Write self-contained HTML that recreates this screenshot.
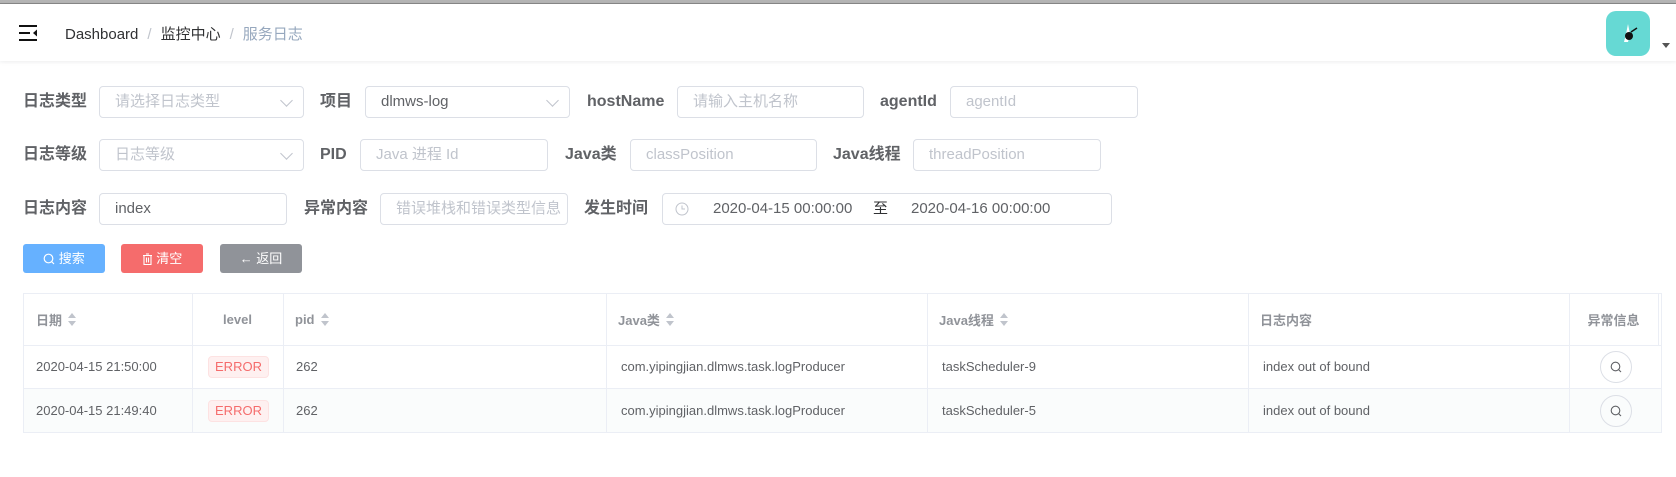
<!DOCTYPE html>
<html><head><meta charset="utf-8"><style>
*{box-sizing:border-box;margin:0;padding:0}
body{width:1676px;height:477px;overflow:hidden;background:#fff;font-family:"Liberation Sans","Noto Sans CJK SC",sans-serif;position:relative;color:#606266}
.a{position:absolute}
.top{left:0;top:0;width:1676px;height:4px;background:#b4b4b4;border-bottom:1px solid #888}
.hdr{left:0;top:4px;width:1676px;height:57px;background:#fff;box-shadow:0 1px 4px rgba(0,21,41,.08)}
.bc{top:23px;left:65px;font-size:15px;color:#303133;white-space:nowrap}
.bc .s{color:#c0c4cc;margin:0 9px}
.bc .l{color:#97a8be}
.lab{font-size:16px;font-weight:bold;color:#606266;white-space:nowrap;line-height:32px}
.in{height:32px;border:1px solid #dcdfe6;border-radius:4px;font-size:15px;line-height:30px;padding-left:15px;color:#c0c4cc;white-space:nowrap;overflow:hidden}
.in.v{color:#606266}
.arr{position:absolute;right:12px;top:9px;width:9px;height:9px;border-right:1px solid #c0c4cc;border-bottom:1px solid #c0c4cc;transform:rotate(45deg)}
.btn{height:29px;border-radius:3px;color:#fff;font-size:13px;line-height:29px;text-align:center}
.tbl{left:23px;top:293px;width:1639px;height:140px;border:1px solid #ebeef5}
.h{position:absolute;font-size:13px;font-weight:bold;color:#909399;white-space:nowrap;top:0;height:51px;display:flex;align-items:center}
.c{position:absolute;font-size:13px;color:#606266;white-space:nowrap}
.vl{position:absolute;width:1px;background:#ebeef5}
.sort{display:inline-block;margin-left:6px;width:8px;height:14px;position:relative}
.sort:before{content:"";position:absolute;left:0;top:0;border:4px solid transparent;border-bottom:5px solid #c0c4cc;border-top:0}
.sort:after{content:"";position:absolute;left:0;top:8px;border:4px solid transparent;border-top:5px solid #c0c4cc;border-bottom:0}
.tag{position:absolute;width:61px;height:22px;border:1px solid #fde2e2;background:#fef0f0;color:#f56c6c;border-radius:4px;font-size:13px;line-height:20px;text-align:center}
.cb{position:absolute;width:32px;height:32px;border:1px solid #dcdfe6;border-radius:50%}
</style></head><body>
<div class="a top"></div>
<div class="a hdr"></div>
<svg class="a" style="left:19px;top:25px" width="20" height="16" viewBox="0 0 20 16"><rect x="0" y="0" width="18" height="2" fill="#111"/><rect x="0" y="7" width="11" height="2" fill="#111"/><rect x="0" y="14" width="18" height="2" fill="#111"/><path d="M18 4.5 L14 8 L18 11.5Z" fill="#111"/></svg>
<div class="a bc">Dashboard<span class="s">/</span>监控中心<span class="s">/</span><span class="l">服务日志</span></div>
<div class="a" style="left:1606px;top:11px;width:44px;height:45px;border-radius:10px;background:#66d9d4"></div>
<svg class="a" style="left:1616px;top:20px" width="26" height="28" viewBox="0 0 26 28"><path d="M12 4 L10 14 L8 22 L12 22 L14 14Z" fill="#fff"/><circle cx="13" cy="16" r="4" fill="#111"/><path d="M15 12 L21 8" stroke="#111" stroke-width="1.5"/></svg>
<div class="a" style="left:1662px;top:43px;border:4px solid transparent;border-top:5px solid #555"></div>

<div class="a lab" style="left:23px;top:86px">日志类型</div>
<div class="a in" style="left:99px;top:86px;width:205px">请选择日志类型<span class="arr"></span></div>
<div class="a lab" style="left:320px;top:86px">项目</div>
<div class="a in v" style="left:365px;top:86px;width:205px">dlmws-log<span class="arr"></span></div>
<div class="a lab" style="left:587px;top:86px">hostName</div>
<div class="a in" style="left:677px;top:86px;width:187px">请输入主机名称</div>
<div class="a lab" style="left:880px;top:86px">agentId</div>
<div class="a in" style="left:950px;top:86px;width:188px">agentId</div>

<div class="a lab" style="left:23px;top:139px">日志等级</div>
<div class="a in" style="left:99px;top:139px;width:205px">日志等级<span class="arr"></span></div>
<div class="a lab" style="left:320px;top:139px">PID</div>
<div class="a in" style="left:360px;top:139px;width:188px">Java 进程 Id</div>
<div class="a lab" style="left:565px;top:139px">Java类</div>
<div class="a in" style="left:630px;top:139px;width:187px">classPosition</div>
<div class="a lab" style="left:833px;top:139px">Java线程</div>
<div class="a in" style="left:913px;top:139px;width:188px">threadPosition</div>

<div class="a lab" style="left:23px;top:193px">日志内容</div>
<div class="a in v" style="left:99px;top:193px;width:188px">index</div>
<div class="a lab" style="left:304px;top:193px">异常内容</div>
<div class="a in" style="left:380px;top:193px;width:188px">错误堆栈和错误类型信息</div>
<div class="a lab" style="left:584px;top:193px">发生时间</div>
<div class="a in v" style="left:662px;top:193px;width:450px;padding-left:0">
<svg style="position:absolute;left:12px;top:8px" width="14" height="14" viewBox="0 0 14 14"><circle cx="7" cy="7" r="6" fill="none" stroke="#c0c4cc"/><path d="M7 3.5V7h3" fill="none" stroke="#c0c4cc"/></svg>
<span style="position:absolute;left:50px">2020-04-15 00:00:00</span><span style="position:absolute;left:210px;color:#303133">至</span><span style="position:absolute;left:248px">2020-04-16 00:00:00</span></div>

<div class="a btn" style="left:23px;top:244px;width:82px;background:#66b1ff">
<svg style="vertical-align:-2px" width="12" height="12" viewBox="0 0 12 12"><circle cx="5.5" cy="5.5" r="4.3" fill="none" stroke="#fff" stroke-width="1.2"/><path d="M8.5 8.5L11 11" stroke="#fff" stroke-width="1.2"/></svg> 搜索</div>
<div class="a btn" style="left:121px;top:244px;width:82px;background:#f56c6c">
<svg style="vertical-align:-2px" width="11" height="12" viewBox="0 0 11 12"><path d="M1 2.5h9M4 1h3M2 2.5v9h7v-9M4.5 4.5v5M6.5 4.5v5" fill="none" stroke="#fff" stroke-width="1.1"/></svg> 清空</div>
<div class="a btn" style="left:220px;top:244px;width:82px;background:#909399">← 返回</div>

<div class="a tbl">
<div style="position:absolute;left:0;top:51px;width:100%;height:1px;background:#ebeef5"></div>
<div style="position:absolute;left:0;top:94px;width:100%;height:1px;background:#ebeef5"></div>
<div style="position:absolute;left:0;top:95px;width:100%;height:43px;background:#fafcfc"></div>
<div class="vl" style="left:168px;top:0;height:138px"></div>
<div class="vl" style="left:259px;top:0;height:138px"></div>
<div class="vl" style="left:582px;top:0;height:138px"></div>
<div class="vl" style="left:903px;top:0;height:138px"></div>
<div class="vl" style="left:1224px;top:0;height:138px"></div>
<div class="vl" style="left:1545px;top:0;height:138px"></div>
<div class="vl" style="left:1634px;top:0;height:51px"></div>
<div class="h" style="left:12px">日期<span class="sort"></span></div>
<div class="h" style="left:168px;width:91px;justify-content:center">level</div>
<div class="h" style="left:271px">pid<span class="sort"></span></div>
<div class="h" style="left:594px">Java类<span class="sort"></span></div>
<div class="h" style="left:915px">Java线程<span class="sort"></span></div>
<div class="h" style="left:1236px">日志内容</div>
<div class="h" style="left:1545px;width:89px;justify-content:center">异常信息</div>

<div class="c" style="left:12px;top:65px">2020-04-15 21:50:00</div>
<div class="tag" style="left:184px;top:62px">ERROR</div>
<div class="c" style="left:272px;top:65px">262</div>
<div class="c" style="left:597px;top:65px">com.yipingjian.dlmws.task.logProducer</div>
<div class="c" style="left:918px;top:65px">taskScheduler-9</div>
<div class="c" style="left:1239px;top:65px">index out of bound</div>
<div class="cb" style="left:1576px;top:57px"><svg style="position:absolute;left:9px;top:9px" width="12" height="12" viewBox="0 0 12 12"><circle cx="5.5" cy="5.5" r="4.3" fill="none" stroke="#606266" stroke-width="1.1"/><path d="M8.5 8.5L11 11" stroke="#606266" stroke-width="1.1"/></svg></div>

<div class="c" style="left:12px;top:109px">2020-04-15 21:49:40</div>
<div class="tag" style="left:184px;top:106px">ERROR</div>
<div class="c" style="left:272px;top:109px">262</div>
<div class="c" style="left:597px;top:109px">com.yipingjian.dlmws.task.logProducer</div>
<div class="c" style="left:918px;top:109px">taskScheduler-5</div>
<div class="c" style="left:1239px;top:109px">index out of bound</div>
<div class="cb" style="left:1576px;top:101px"><svg style="position:absolute;left:9px;top:9px" width="12" height="12" viewBox="0 0 12 12"><circle cx="5.5" cy="5.5" r="4.3" fill="none" stroke="#606266" stroke-width="1.1"/><path d="M8.5 8.5L11 11" stroke="#606266" stroke-width="1.1"/></svg></div>
</div>
</body></html>
